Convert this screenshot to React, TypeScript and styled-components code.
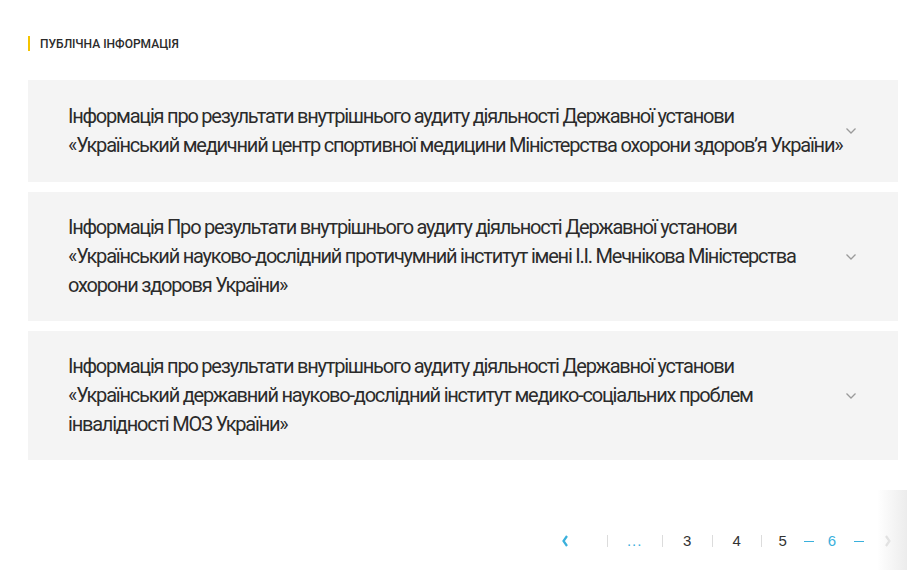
import styled, { createGlobalStyle } from "styled-components";

const GlobalStyle = createGlobalStyle`
  html, body {
    margin: 0;
    padding: 0;
    background: #fff;
  }
  body {
    font-family: "Roboto", "Liberation Sans", sans-serif;
    color: #2b2b2b;
  }
`;

const Page = styled.div`
  position: relative;
  width: 907px;
  height: 570px;
  overflow: hidden;
  padding: 36px 9px 0 28px;
  box-sizing: border-box;
`;

const SectionLabel = styled.div`
  display: flex;
  align-items: center;
  height: 15px;
  padding-left: 10px;
  border-left: 2px solid #f5c400;
  font-size: 12px;
  font-weight: 500;
  text-transform: uppercase;
  color: #2b2b2b;
`;

const List = styled.div`
  display: flex;
  flex-direction: column;
  gap: 10px;
  margin-top: 29px;
`;

const Item = styled.div`
  display: flex;
  align-items: center;
  background: #f4f4f4;
  padding: 21px 41px 21px 40px;
  min-height: 102px;
  box-sizing: border-box;
`;

const ItemTitle = styled.div`
  flex: 1;
  min-width: 0;
  font-size: 20px;
  line-height: 29px;
  letter-spacing: -1.22px;
  color: #2b2b2b;
`;

const TitleLine = styled.span`
  display: block;
  white-space: nowrap;
`;

const Chevron = styled.svg`
  flex: none;
  width: 12px;
  height: 8px;
  margin-left: 8px;
`;

const Pager = styled.nav`
  display: flex;
  align-items: center;
  justify-content: flex-end;
  margin-top: 73px;
  padding-right: 6px;
  font-family: "Liberation Sans", Arial, sans-serif;
  font-size: 15px;
  line-height: 16px;
`;

const Arrow = styled.span<{ $active?: boolean }>`
  display: flex;
  align-items: center;
  color: ${(p) => (p.$active ? "#3ab0dc" : "#dcdcdc")};
  margin: ${(p) => (p.$active ? "0 38px 0 0" : "0 0 0 20px")};
`;

const PageCell = styled.span<{ $active?: boolean; $w: number }>`
  display: flex;
  align-items: center;
  justify-content: center;
  width: ${(p) => p.$w}px;
  height: 12px;
  border-left: 1px solid #dcdcdc;
  color: ${(p) => (p.$active ? "#3ab0dc" : "#333")};
  letter-spacing: ${(p) => (p.$active ? "1px" : "0")};
`;

const Current = styled.span`
  display: flex;
  align-items: center;
  color: #3ab0dc;
  &::before,
  &::after {
    content: "";
    width: 10px;
    height: 1px;
    background: #3ab0dc;
  }
  &::before {
    margin-right: 14px;
  }
  &::after {
    margin-left: 18px;
  }
`;

const EdgeShade = styled.div`
  position: absolute;
  right: 0;
  bottom: 0;
  width: 30px;
  height: 80px;
  background: linear-gradient(to right, rgba(240, 240, 240, 0), #ececec);
`;

const items = [
  [
    "Інформація про результати внутрішнього аудиту діяльності Державної установи",
    "«Український медичний центр спортивної медицини Міністерства охорони здоров’я України»",
  ],
  [
    "Інформація Про результати внутрішнього аудиту діяльності Державної установи",
    "«Український науково-дослідний протичумний інститут імені І.І. Мечнікова Міністерства",
    "охорони здоровя України»",
  ],
  [
    "Інформація про результати внутрішнього аудиту діяльності Державної установи",
    "«Український державний науково-дослідний інститут медико-соціальних проблем",
    "інвалідності МОЗ України»",
  ],
];

const ChevronDown = () => (
  <Chevron viewBox="0 0 12 8" fill="none">
    <path d="M1.5 1.5 L6 6 L10.5 1.5" stroke="#9a9a9a" strokeWidth="1.3" />
  </Chevron>
);

export default function App() {
  return (
    <>
      <GlobalStyle />
      <Page>
        <SectionLabel>Публічна інформація</SectionLabel>
        <List>
          {items.map((lines, i) => (
            <Item key={i}>
              <ItemTitle>
                {lines.map((line, j) => (
                  <TitleLine key={j}>{line}</TitleLine>
                ))}
              </ItemTitle>
              <ChevronDown />
            </Item>
          ))}
        </List>
        <Pager>
          <Arrow $active>
            <svg width="8" height="12" viewBox="0 0 8 12" fill="none">
              <path d="M6 1 L2.5 6 L6 11" stroke="currentColor" strokeWidth="2.2" />
            </svg>
          </Arrow>
          <PageCell $w={54} $active>
            ...
          </PageCell>
          <PageCell $w={49}>3</PageCell>
          <PageCell $w={48}>4</PageCell>
          <PageCell $w={42}>5</PageCell>
          <Current>6</Current>
          <Arrow>
            <svg width="8" height="12" viewBox="0 0 8 12" fill="none">
              <path d="M2 1 L5.5 6 L2 11" stroke="currentColor" strokeWidth="2.2" />
            </svg>
          </Arrow>
        </Pager>
        <EdgeShade />
      </Page>
    </>
  );
}
